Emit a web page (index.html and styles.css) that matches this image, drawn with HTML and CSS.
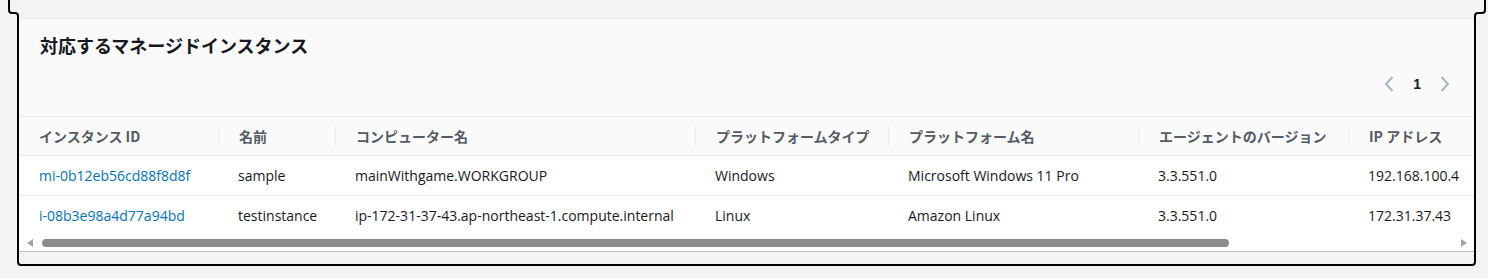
FILE: index.html
```html
<!DOCTYPE html>
<html lang="ja">
<head>
<meta charset="utf-8">
<title>対応するマネージドインスタンス</title>
<link rel="stylesheet" href="styles.css">
</head>
<body>
<svg class="focus-frame" width="1488" height="278" viewBox="0 0 1488 278" aria-hidden="true">
  <path d="M9 0 V10 Q9 13 12 13 H15 Q18 13 18 16 V262 Q18 265 21 265 H1472 Q1475 265 1475 262 V16 Q1475 13 1478 13 H1482 Q1485 13 1485 10 V0" fill="none" stroke="#000" stroke-width="2"/>
</svg>
<section class="card">
  <div class="card-header">
    <h2 class="title">対応するマネージドインスタンス</h2>
    <div class="pager">
      <svg class="chev" width="10" height="16" viewBox="0 0 10 16"><path d="M8.5 1 L2 8 L8.5 15" fill="none" stroke="#aab7b8" stroke-width="2"/></svg>
      <span class="page">1</span>
      <svg class="chev" width="10" height="16" viewBox="0 0 10 16"><path d="M1.5 1 L8 8 L1.5 15" fill="none" stroke="#aab7b8" stroke-width="2"/></svg>
    </div>
  </div>
  <div class="table-wrap">
    <table class="grid">
      <colgroup>
        <col class="c1"><col class="c2"><col class="c3"><col class="c4"><col class="c5"><col class="c6"><col class="c7">
      </colgroup>
      <thead>
        <tr>
          <th><span class="th-in">インスタンス ID</span></th>
          <th><span class="th-in sep">名前</span></th>
          <th><span class="th-in sep">コンピューター名</span></th>
          <th><span class="th-in sep">プラットフォームタイプ</span></th>
          <th><span class="th-in sep">プラットフォーム名</span></th>
          <th><span class="th-in sep">エージェントのバージョン</span></th>
          <th><span class="th-in sep">IP アドレス</span></th>
        </tr>
      </thead>
      <tbody>
        <tr>
          <td><a class="link" href="#">mi-0b12eb56cd88f8d8f</a></td>
          <td>sample</td>
          <td>mainWithgame.WORKGROUP</td>
          <td>Windows</td>
          <td>Microsoft Windows 11 Pro</td>
          <td>3.3.551.0</td>
          <td>192.168.100.4</td>
        </tr>
        <tr class="last">
          <td><a class="link" href="#">i-08b3e98a4d77a94bd</a></td>
          <td>testinstance</td>
          <td>ip-172-31-37-43.ap-northeast-1.compute.internal</td>
          <td>Linux</td>
          <td>Amazon Linux</td>
          <td>3.3.551.0</td>
          <td>172.31.37.43</td>
        </tr>
      </tbody>
    </table>
  </div>
  <div class="hscroll">
    <span class="arrow left"></span>
    <span class="thumb"></span>
    <span class="arrow right"></span>
  </div>
  <div class="footer"></div>
</section>
</body>
</html>
```

FILE: styles.css
```css
html, body {
  margin: 0;
  padding: 0;
}
body {
  background: #f2f3f3;
  width: 1488px;
  height: 278px;
  overflow: hidden;
  font-family: "Open Sans", "Noto Sans CJK JP", sans-serif;
  font-size: 14px;
  color: #16191f;
}
.focus-frame {
  position: absolute;
  left: 0;
  top: 0;
  z-index: 5;
  pointer-events: none;
}
.card {
  margin: 18px 0 0 19px;
  width: 1456px;
  background: #fafafa;
  border-top: 1px solid #eaeded;
  overflow: hidden;
}
.card-header {
  height: 97px;
  box-sizing: border-box;
  padding: 15px 20px 0 21px;
  display: flex;
  flex-direction: column;
}
.title {
  margin: 0;
  font-size: 18px;
  line-height: 22px;
  font-weight: 700;
  color: #16191f;
  font-family: "Noto Sans CJK JP", "Liberation Sans", sans-serif;
}
.pager {
  align-self: flex-end;
  margin-top: 17px;
  margin-right: 5px;
  display: flex;
  align-items: center;
  gap: 19px;
  height: 22px;
}
.page {
  font-family: "Liberation Sans", sans-serif;
  font-weight: 700;
  font-size: 14px;
  color: #16191f;
}
.chev {
  display: block;
}
.table-wrap {
  overflow: hidden;
  border-top: 1px solid #eaeded;
}
.grid {
  border-collapse: collapse;
  table-layout: fixed;
  width: 1490px;
}
.c1 { width: 199px; }
.c2 { width: 117px; }
.c3 { width: 360px; }
.c4 { width: 193px; }
.c5 { width: 250px; }
.c6 { width: 210px; }
.c7 { width: 161px; }
thead th {
  height: 38px;
  padding: 0;
  text-align: left;
  font-weight: 700;
  color: #545b64;
  background: #fafafa;
  border-bottom: 1px solid #eaeded;
  white-space: nowrap;
  font-family: "Noto Sans CJK JP", "Liberation Sans", sans-serif;
  font-size: 14px;
}
.th-in {
  display: block;
  padding-left: 20px;
  line-height: 20px;
}
.th-in.sep {
  border-left: 1px solid #eaeded;
}
tbody td {
  height: 39px;
  padding: 0 0 0 20px;
  background: #fff;
  border-bottom: 1px solid #eaeded;
  white-space: nowrap;
  vertical-align: middle;
  line-height: 20px;
}
tbody tr.last td {
  border-bottom: none;
}
.link {
  color: #0073bb;
  text-decoration: none;
}
.hscroll {
  height: 16px;
  background: #fff;
  display: flex;
  align-items: center;
  border-bottom: 1px solid #b9bcbd;
}
.arrow {
  width: 0;
  height: 0;
  border-top: 4px solid transparent;
  border-bottom: 4px solid transparent;
}
.arrow.left {
  margin-left: 8px;
  border-right: 6px solid #a3a3a3;
}
.arrow.right {
  margin-left: 232px;
  border-left: 6px solid #a3a3a3;
}
.thumb {
  margin-left: 9px;
  width: 1187px;
  height: 8px;
  border-radius: 4px;
  background: #8c8c8c;
}
.footer {
  height: 14px;
  background: #f2f3f3;
}
```
